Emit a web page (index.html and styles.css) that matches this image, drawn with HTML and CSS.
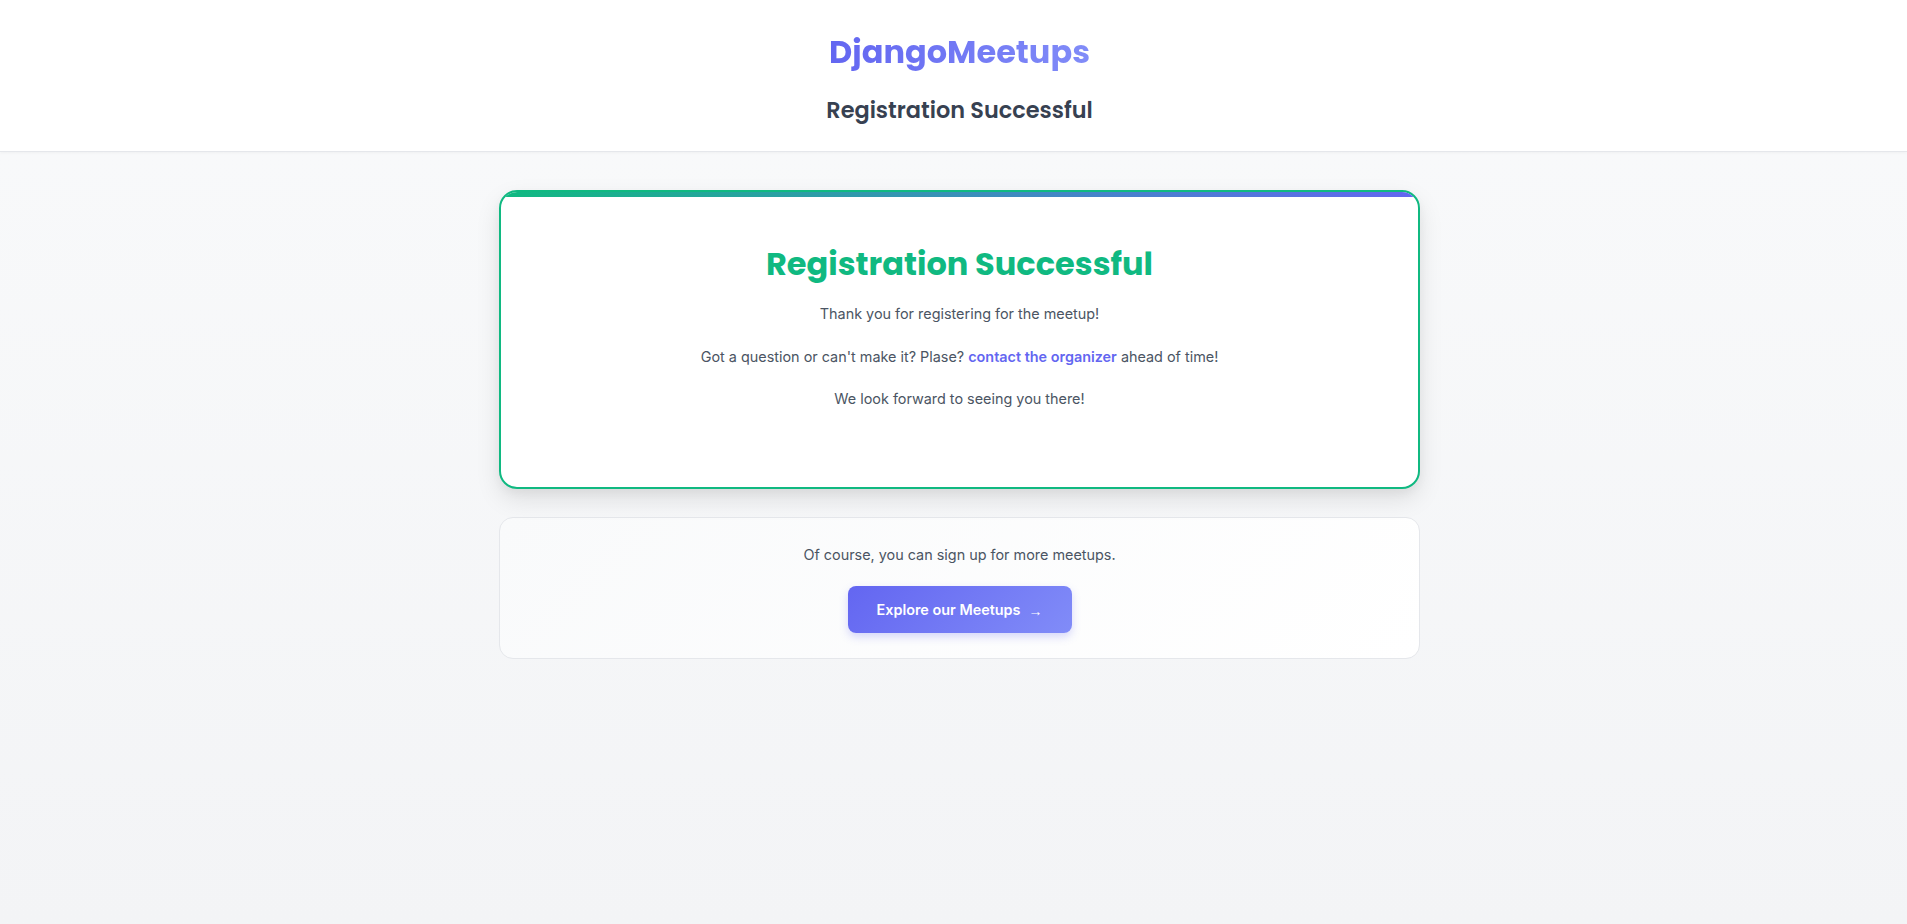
FILE: index.html
```html
<!DOCTYPE html>
<html lang="en">
<head>
<meta charset="utf-8">
<title>Registration Successful</title>
<link rel="stylesheet" href="styles.css">
</head>
<body>
<header class="site-header">
  <div class="header-inner">
    <h1 class="brand">DjangoMeetups</h1>
    <h2 class="page-title">Registration Successful</h2>
  </div>
</header>
<main class="main">
  <section class="success-card">
    <h2 class="success-title">Registration Successful</h2>
    <p>Thank you for registering for the meetup!</p>
    <p>Got a question or can't make it? Plase? <a class="link" href="#">contact the organizer</a> ahead of time!</p>
    <p>We look forward to seeing you there!</p>
  </section>
  <section class="more-card">
    <p>Of course, you can sign up for more meetups.</p>
    <a class="btn" href="#">Explore our Meetups <span class="arrow">→</span></a>
  </section>
</main>
</body>
</html>
```

FILE: styles.css
```css
* { box-sizing: border-box; }
html, body { margin: 0; padding: 0; }
body {
  font-family: Inter, "Noto Sans", sans-serif;
  background: linear-gradient(180deg, #f9fafb 0%, #f3f4f6 100%);
  min-height: 924px;
  color: #4b5563;
}
.site-header {
  background: #ffffff;
  border-bottom: 1px solid #e5e7eb;
  box-shadow: 0 1px 3px rgba(0,0,0,0.04);
  height: 152px;
}
.header-inner {
  padding: 28px 0 0 12px;
  display: flex;
  flex-direction: column;
  align-items: center;
}
.brand {
  margin: 0;
  font-family: Poppins, Inter, sans-serif;
  font-size: 32px;
  font-weight: 700;
  line-height: 48px;
  background: linear-gradient(90deg, #6366f1, #818cf8);
  -webkit-background-clip: text;
  background-clip: text;
  color: transparent;
}
.page-title {
  margin: 18px 0 0;
  font-family: Poppins, Inter, sans-serif;
  font-size: 22.4px;
  font-weight: 600;
  line-height: 32px;
  color: #374151;
}
.main {
  padding: 38px 0 0 12px;
  display: flex;
  flex-direction: column;
  align-items: center;
  gap: 28px;
}
.success-card {
  position: relative;
  width: 921px;
  height: 299px;
  background: #ffffff;
  border: 2px solid #10b981;
  border-radius: 18px;
  overflow: hidden;
  box-shadow: 0 10px 25px rgba(0,0,0,0.10), 0 4px 10px rgba(0,0,0,0.04);
  padding: 52px 40px 40px;
  text-align: center;
}
.success-card::before {
  content: "";
  position: absolute;
  left: 0; right: 0; top: 0;
  height: 5px;
  background: linear-gradient(90deg, #10b981, #6366f1);
}
.success-title {
  margin: 0 0 19px;
  font-family: Poppins, Inter, sans-serif;
  font-size: 32px;
  font-weight: 700;
  line-height: 40px;
  color: #10b981;
}
.success-card p {
  margin: 0 0 20px;
  font-size: 14.4px;
  line-height: 22.5px;
  color: #4b5563;
}
.link {
  color: #6366f1;
  font-weight: 600;
  text-decoration: none;
}
.more-card {
  width: 921px;
  height: 142px;
  border: 1px solid #e5e7eb;
  border-radius: 14px;
  background: linear-gradient(135deg, #f9fafb, #ffffff);
  padding: 26px 20px 0;
  display: flex;
  flex-direction: column;
  align-items: center;
}
.more-card p {
  margin: 0 0 20px;
  font-size: 14.4px;
  line-height: 22px;
  color: #4b5563;
}
.btn {
  display: inline-flex;
  align-items: center;
  justify-content: center;
  gap: 8px;
  width: 224px;
  height: 47px;
  border-radius: 8px;
  background: linear-gradient(135deg, #6366f1, #818cf8);
  color: #ffffff;
  font-weight: 600;
  font-size: 14.4px;
  text-decoration: none;
  box-shadow: 0 4px 8px rgba(99,102,241,0.25);
}
.arrow {
  font-family: "Liberation Sans", sans-serif;
  font-weight: 400;
  font-size: 14px;
  position: relative;
  top: 1px;
}
```
